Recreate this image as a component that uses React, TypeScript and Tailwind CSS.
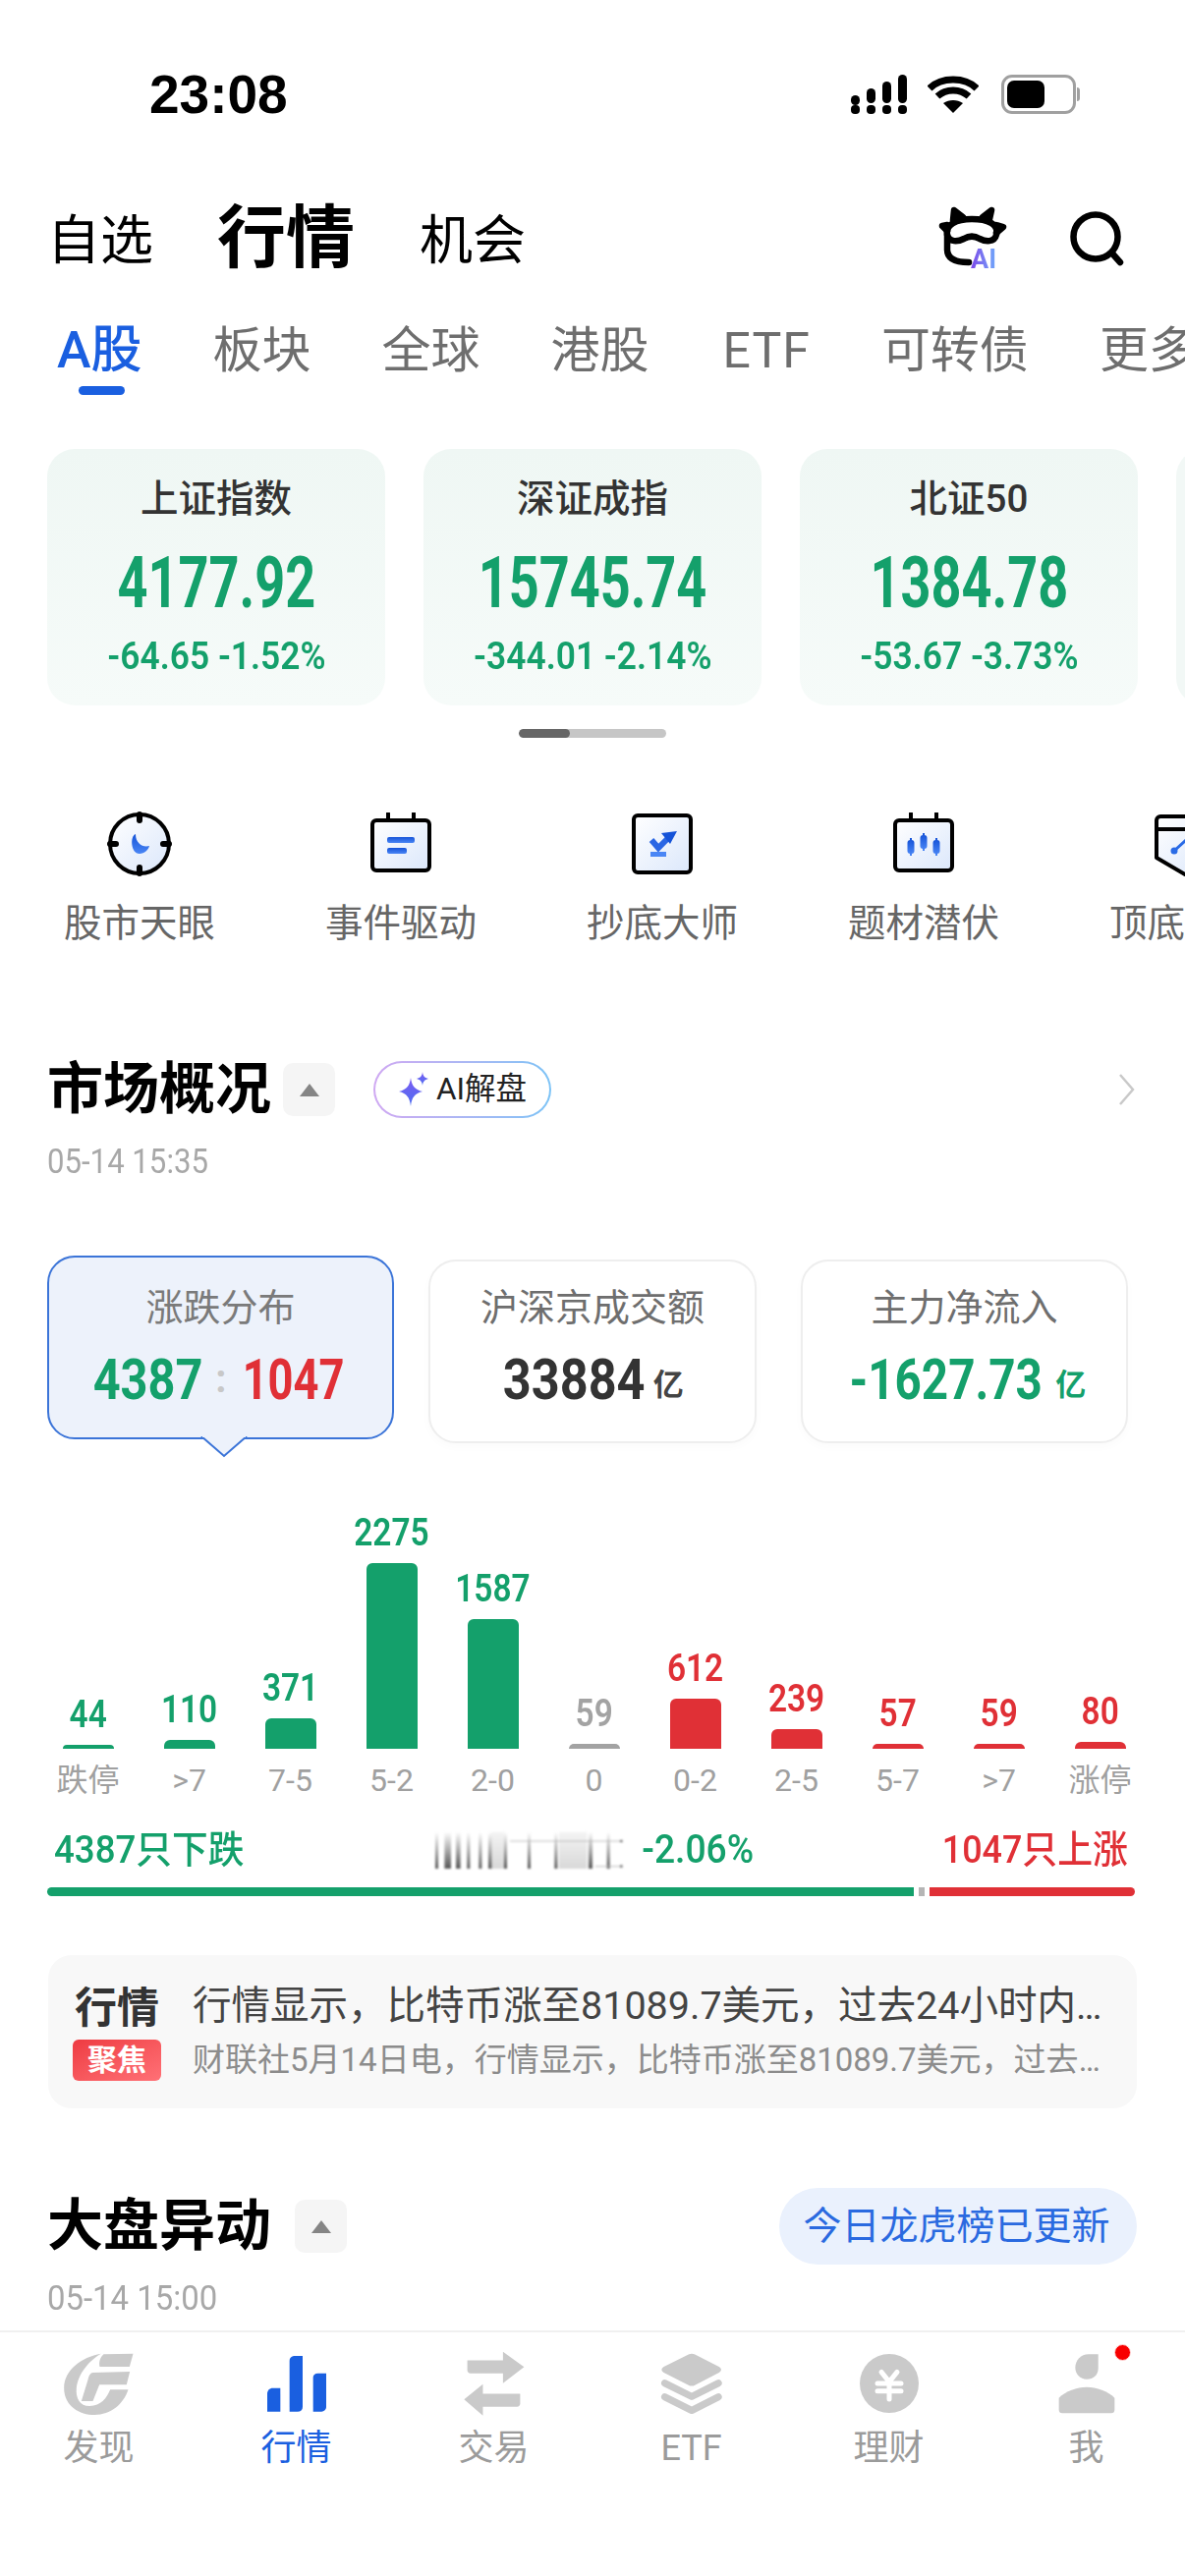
import React from 'react';

const green = 'text-[#14a06b]';
const red = 'text-[#e03036]';

const indexCards = [
  { name: '上证指数', value: '4177.92', change: '-64.65 -1.52%' },
  { name: '深证成指', value: '15745.74', change: '-344.01 -2.14%' },
  { name: '北证50', value: '1384.78', change: '-53.67 -3.73%' },
];

const bars = [
  { value: 44, label: '跌停', h: 'h-[4px]', text: 'text-[#14a06b]', bg: 'bg-[#14a06b]' },
  { value: 110, label: '>7', h: 'h-[9px]', text: 'text-[#14a06b]', bg: 'bg-[#14a06b]' },
  { value: 371, label: '7-5', h: 'h-[31px]', text: 'text-[#14a06b]', bg: 'bg-[#14a06b]' },
  { value: 2275, label: '5-2', h: 'h-[189px]', text: 'text-[#14a06b]', bg: 'bg-[#14a06b]' },
  { value: 1587, label: '2-0', h: 'h-[132px]', text: 'text-[#14a06b]', bg: 'bg-[#14a06b]' },
  { value: 59, label: '0', h: 'h-[5px]', text: 'text-[#a3a3a3]', bg: 'bg-[#a3a3a3]' },
  { value: 612, label: '0-2', h: 'h-[51px]', text: 'text-[#e03036]', bg: 'bg-[#e03036]' },
  { value: 239, label: '2-5', h: 'h-[20px]', text: 'text-[#e03036]', bg: 'bg-[#e03036]' },
  { value: 57, label: '5-7', h: 'h-[5px]', text: 'text-[#e03036]', bg: 'bg-[#e03036]' },
  { value: 59, label: '>7', h: 'h-[5px]', text: 'text-[#e03036]', bg: 'bg-[#e03036]' },
  { value: 80, label: '涨停', h: 'h-[7px]', text: 'text-[#e03036]', bg: 'bg-[#e03036]' },
];

function IconDefs() {
  return (
    <svg width="0" height="0" className="absolute">
      <defs>
        <linearGradient id="paper" x1="0" y1="0" x2="1" y2="1">
          <stop offset="0" stopColor="#ffffff" />
          <stop offset="1" stopColor="#dbe7fb" />
        </linearGradient>
        <linearGradient id="inkBlue" x1="0" y1="0" x2="0" y2="1">
          <stop offset="0" stopColor="#1553d8" />
          <stop offset="1" stopColor="#4a86f5" />
        </linearGradient>
        <linearGradient id="sparkle" x1="0" y1="0" x2="0" y2="1">
          <stop offset="0" stopColor="#7d5cf2" />
          <stop offset="1" stopColor="#4d6ff0" />
        </linearGradient>
      </defs>
    </svg>
  );
}

function SignalIcon() {
  return (
    <svg width="58" height="42" viewBox="0 0 58 42" fill="#000">
      <rect x="0" y="22" width="9" height="10" rx="4.5" />
      <rect x="16" y="15" width="9" height="15" rx="4.5" />
      <rect x="32" y="8" width="9" height="22" rx="4.5" />
      <rect x="48" y="1" width="9" height="29" rx="4.5" />
      <rect x="0" y="32" width="9" height="9" rx="4" />
      <rect x="16" y="32" width="9" height="9" rx="4" />
      <rect x="32" y="32" width="9" height="9" rx="4" />
      <rect x="48" y="32" width="9" height="9" rx="4" />
    </svg>
  );
}

function WifiIcon() {
  return (
    <svg width="52" height="40" viewBox="0 0 52 40" fill="none" stroke="#000" strokeWidth="7">
      <path d="M2 14C14 2 38 2 50 14" />
      <path d="M10 22C19 14 33 14 42 22" />
      <path d="M26 39L16 29C22 25 30 25 36 29Z" fill="#000" stroke="none" />
    </svg>
  );
}

function BatteryIcon() {
  return (
    <div className="flex items-center">
      <div className="w-[76px] h-[40px] rounded-[11px] border-[3px] border-[#a0a0a0] p-[3px]">
        <div className="w-[38px] h-full rounded-[7px] bg-black" />
      </div>
      <div className="w-[3px] h-[14px] rounded-r-full bg-[#a0a0a0] ml-[1px]" />
    </div>
  );
}

function CatIcon() {
  return (
    <div className="relative w-[80px] h-[70px]">
      <svg width="80" height="70" viewBox="0 0 80 70" fill="none" stroke="#000" strokeWidth="6.5" strokeLinecap="round" strokeLinejoin="round">
        <path d="M13 31C11 21 22 15 38 15C54 15 66 20 63 31C61 39 52 38 46 35C41 32 35 32 30 35C24 38 15 39 13 31Z" />
        <path d="M13 31V46C13 54 19 59 35 59" />
        <path d="M19 16L20 6L29 13" fill="#000" />
        <path d="M56 15L58 6L49 13" fill="#000" />
        <path d="M13 21L8 22L13 27" fill="#000" />
        <path d="M63 21L70 23L63 29" fill="#000" />
      </svg>
      <span className="absolute left-[37px] top-[41px] text-[27px] leading-[30px] font-bold bg-linear-to-r from-[#7a45e8] to-[#6ea8fa] bg-clip-text text-transparent">AI</span>
    </div>
  );
}

function SearchIcon() {
  return (
    <svg width="60" height="60" viewBox="0 0 60 60" fill="none" stroke="#000" strokeWidth="6.5" strokeLinecap="round">
      <circle cx="28" cy="28" r="22.5" />
      <path d="M45 45L53 54" />
    </svg>
  );
}

function EyeIcon() {
  return (
    <svg width="66" height="66" viewBox="0 0 66 66" fill="url(#paper)" stroke="#000" strokeWidth="4">
      <circle cx="33" cy="33" r="30" />
      <path d="M33 3V9M33 57V63M3 33H9M57 33H63" strokeWidth="6" strokeLinecap="round" />
      <path d="M29 23C23 25 24 43 33 43C38 43 42 39 43 35C37 37 29 33 29 23Z" fill="url(#inkBlue)" stroke="none" />
    </svg>
  );
}

function CalendarIcon() {
  return (
    <svg width="64" height="64" viewBox="0 0 64 64" fill="url(#paper)" stroke="#000" strokeWidth="4">
      <rect x="3" y="8" width="58" height="51" rx="4" />
      <path d="M19 1V8M45 1V8" strokeLinecap="round" />
      <rect x="18" y="25" width="28" height="6" rx="2" fill="url(#inkBlue)" stroke="none" />
      <rect x="18" y="36" width="20" height="6" rx="2" fill="url(#inkBlue)" stroke="none" />
    </svg>
  );
}

function BottomIcon() {
  return (
    <svg width="64" height="64" viewBox="0 0 64 64" fill="url(#paper)" stroke="#000" strokeWidth="4">
      <rect x="3" y="3" width="58" height="58" rx="4" />
      <path d="M21 28L28 36L40 24" fill="none" stroke="#2a66e4" strokeWidth="6" />
      <path d="M31 21L47 19L40 32Z" fill="#1553d8" stroke="none" />
      <rect x="20" y="40" width="16" height="5" fill="#4a86f5" stroke="none" />
    </svg>
  );
}

function CandleIcon() {
  return (
    <svg width="64" height="64" viewBox="0 0 64 64" fill="url(#paper)" stroke="#000" strokeWidth="4">
      <rect x="3" y="8" width="58" height="51" rx="4" />
      <path d="M19 1V8M45 1V8" strokeLinecap="round" />
      <g fill="url(#inkBlue)" stroke="none">
        <rect x="15.5" y="28" width="7" height="14" rx="3" />
        <rect x="18" y="26" width="2" height="18" />
        <rect x="28.5" y="23" width="7" height="14" rx="3" />
        <rect x="31" y="21" width="2" height="18" />
        <rect x="41.5" y="28" width="7" height="14" rx="3" />
        <rect x="44" y="26" width="2" height="18" />
      </g>
    </svg>
  );
}

function TopBottomIcon() {
  return (
    <svg width="64" height="66" viewBox="0 0 64 66" fill="url(#paper)" stroke="#000" strokeWidth="4" strokeLinejoin="round">
      <path d="M7 5H57C59 5 61 7 61 9V47L32 64L3 47V9C3 7 5 5 7 5Z" />
      <path d="M3 18H61" />
      <path d="M21 40L33 29L42 36" fill="none" stroke="#2a6be6" strokeWidth="3" />
      <circle cx="21" cy="40" r="3.5" fill="#2a6be6" stroke="none" />
    </svg>
  );
}

function Toggle() {
  return (
    <div className="w-[53px] h-[54px] rounded-[10px] bg-[#f5f5f5] flex items-center justify-center">
      <div className="w-0 h-0 border-x-[10px] border-x-transparent border-b-[13px] border-b-[#858585]" />
    </div>
  );
}

function Sparkle() {
  return (
    <svg width="32" height="36" viewBox="0 0 32 36" fill="url(#sparkle)">
      <path d="M13 6C14 14 17 18 25 20C17 22 14 26 13 35C12 26 9 22 1 20C9 18 12 14 13 6Z" />
      <path d="M25 0C25.5 4 27 6 31 7C27 8 25.5 10 25 14C24.5 10 23 8 19 7C23 6 24.5 4 25 0Z" />
    </svg>
  );
}

// the smeared strip in front of the average change
function SmearStrip() {
  return (
    <svg width="210" height="50" viewBox="0 0 630 150" className="blur-[0.8px]">
      <defs>
        <linearGradient id="smear" x1="0" y1="0" x2="0" y2="1">
          <stop offset="0" stopColor="#fff" />
          <stop offset="1" stopColor="#555" />
        </linearGradient>
        <linearGradient id="smearBox" x1="0" y1="0" x2="0" y2="1">
          <stop offset="0" stopColor="#f4f4f4" />
          <stop offset="1" stopColor="#d8d8d8" />
        </linearGradient>
      </defs>
      <rect x="178" y="20" width="50" height="112" fill="url(#smearBox)" />
      <rect x="390" y="20" width="85" height="112" fill="url(#smearBox)" />
      <g fill="url(#smear)">
        <rect x="12" y="20" width="9" height="112" />
        <rect x="40" y="20" width="20" height="112" />
        <rect x="75" y="20" width="14" height="112" />
        <rect x="109" y="20" width="9" height="112" />
        <rect x="145" y="20" width="9" height="112" />
        <rect x="174" y="20" width="10" height="112" />
        <rect x="222" y="20" width="9" height="112" />
        <rect x="294" y="20" width="9" height="112" />
        <rect x="376" y="20" width="9" height="112" />
        <rect x="480" y="20" width="12" height="112" />
        <rect x="536" y="20" width="9" height="112" />
      </g>
      <path d="M240 48H580" stroke="#aaa" strokeWidth="4" opacity="0.5" />
      <circle cx="580" cy="48" r="4" fill="#666" />
      <path d="M500 125H580" stroke="#bbb" strokeWidth="3" />
      <circle cx="580" cy="125" r="4" fill="#666" />
    </svg>
  );
}

function LogoTab() {
  return (
    <svg width="72" height="65" viewBox="47 40 215 195" fill="#cacaca">
      <path d="M160 45C100 55 47 95 47 150C47 205 95 232 140 232C190 232 228 200 243 155L188 155C178 180 160 205 125 205C95 205 82 180 85 150C90 105 125 65 160 45Z" />
      <path d="M168 47L258 45L247 85L156 85C152 70 158 56 168 47Z" />
      <path d="M135 103L248 100L238 140L155 140L135 190L100 190L120 125C123 112 128 103 135 103Z" />
    </svg>
  );
}

function MarketTab() {
  return (
    <svg width="62" height="60" viewBox="660 55 186 178" fill="#1a5fe0">
      <path d="M663 230V175C663 165 670 158 680 158H703V230Z" />
      <path d="M731 230V75C731 65 738 60 748 60H771V215C771 225 765 230 755 230Z" />
      <path d="M803 230V125C803 118 808 113 818 113H843V215C843 225 835 230 825 230Z" />
    </svg>
  );
}

function TradeTab() {
  return (
    <svg width="62" height="66" viewBox="1265 36 186 200" fill="#cacaca">
      <path d="M1385 38L1450 85L1385 135V105H1285C1279 105 1275 100 1275 95V65H1385Z" />
      <path d="M1323 138L1265 185L1323 235V208H1428C1434 208 1438 203 1438 198V168H1323Z" />
    </svg>
  );
}

function EtfTab() {
  return (
    <svg width="64" height="64" viewBox="92 30 196 192" fill="#cacaca">
      <path d="M180 36C186 32 194 32 200 36L275 74C284 79 284 87 275 92L200 131C194 135 186 135 180 131L103 92C94 87 94 79 103 74Z" />
      <path d="M106 125L190 167L273 125M106 168L190 210L273 168" fill="none" stroke="#cacaca" strokeWidth="22" strokeLinecap="round" strokeLinejoin="round" />
    </svg>
  );
}

function MoneyTab() {
  return (
    <svg width="60" height="60" viewBox="702 45 180 180">
      <circle cx="792" cy="135" r="90" fill="#cacaca" />
      <path d="M768 100L792 130L816 100M756 135H828M756 158H828M792 130V183" fill="none" stroke="#fff" strokeWidth="15" strokeLinecap="round" strokeLinejoin="round" />
    </svg>
  );
}

function MeTab() {
  return (
    <div className="relative">
      <svg width="60" height="62" viewBox="1305 48 180 186" fill="#cacaca">
        <path d="M1430 52V95C1430 115 1415 128 1395 128C1375 128 1360 112 1360 92C1360 70 1378 52 1400 52Z" />
        <path d="M1310 185C1330 165 1365 152 1395 152C1425 152 1460 165 1480 185V222C1480 228 1476 232 1470 232H1320C1314 232 1310 228 1310 222Z" />
      </svg>
      <div className="absolute left-[58px] -top-[9px] w-[17px] h-[17px] rounded-full bg-[#f80000] border border-[#fdd]" />
    </div>
  );
}

const tabs = [
  { label: '发现', icon: <LogoTab /> },
  { label: '行情', icon: <MarketTab />, active: true },
  { label: '交易', icon: <TradeTab /> },
  { label: 'ETF', icon: <EtfTab /> },
  { label: '理财', icon: <MoneyTab /> },
  { label: '我', icon: <MeTab /> },
];

export default function App() {
  const subTab = 'text-[50px] leading-[60px] text-[#6e6e6e] shrink-0';
  return (
    <div className="w-[1206px] h-[2622px] bg-white overflow-hidden flex flex-col font-['Roboto','Noto_Sans_CJK_SC',sans-serif]">
      <IconDefs />

      {/* status bar */}
      <div className="flex items-center justify-between h-[44px] mt-[74px] pl-[152px] pr-[107px] shrink-0">
        <span className="font-['Liberation_Sans',sans-serif] font-bold text-[55px] leading-[44px] text-black">23:08</span>
        <div className="flex items-center">
          <SignalIcon />
          <div className="ml-[20px]"><WifiIcon /></div>
          <div className="ml-[23px]"><BatteryIcon /></div>
        </div>
      </div>

      {/* top tabs */}
      <div className="flex items-center h-[94px] mt-[78px] pl-[48px] pr-[59px] shrink-0">
        <span className="text-[54px] leading-[60px] text-black mt-[6px]">自选</span>
        <span className="text-[70px] leading-[80px] font-bold text-black ml-[65px]">行情</span>
        <span className="text-[54px] leading-[60px] text-black ml-[66px] mt-[6px]">机会</span>
        <div className="ml-auto flex items-center gap-[56px]">
          <CatIcon />
          <SearchIcon />
        </div>
      </div>

      {/* market tabs */}
      <div className="flex items-center h-[60px] mt-[37px] pl-[58px] gap-[72px] shrink-0 whitespace-nowrap">
        <span className="relative text-[52px] leading-[60px] font-medium text-[#1a5fe0]">
          A股
          <span className="absolute left-[22px] -bottom-[15px] w-[47px] h-[9px] rounded-full bg-[#1a5fe0]" />
        </span>
        <span className={subTab}>板块</span>
        <span className={subTab}>全球</span>
        <span className={subTab}>港股</span>
        <span className={`${subTab} ml-[3px] tracking-[1px]`}>ETF</span>
        <span className={subTab}>可转债</span>
        <span className={subTab}>更多</span>
      </div>

      {/* index cards */}
      <div className="flex gap-[39px] pl-[48px] mt-[70px] shrink-0">
        {indexCards.map((c) => (
          <div key={c.name} className="w-[344px] h-[261px] shrink-0 rounded-[28px] bg-linear-to-b from-[#eff7f4] to-[#f6fbf9] flex flex-col items-center pt-[27px]">
            <span className="text-[38.5px] leading-[48px] font-medium text-[#333]">{c.name}</span>
            <span className={`inline-block mt-[26px] text-[72px] leading-[72px] font-bold scale-x-[0.75] ${green}`}>{c.value}</span>
            <span className={`inline-block mt-[16px] text-[38px] leading-[44px] font-semibold whitespace-nowrap scale-x-[0.93] ${green}`}>{c.change}</span>
          </div>
        ))}
        <div className="w-[344px] h-[261px] shrink-0 rounded-[28px] bg-[#f2f8f6]" />
      </div>

      {/* scroll indicator */}
      <div className="self-center w-[150px] h-[9px] rounded-full bg-[#c6c6c6] mt-[24px] shrink-0 overflow-hidden">
        <div className="w-[52px] h-full rounded-full bg-[#666]" />
      </div>

      {/* shortcuts */}
      <div className="flex pl-[9px] mt-[75px] shrink-0">
        {[
          { label: '股市天眼', icon: <EyeIcon /> },
          { label: '事件驱动', icon: <CalendarIcon /> },
          { label: '抄底大师', icon: <BottomIcon /> },
          { label: '题材潜伏', icon: <CandleIcon /> },
          { label: '顶底信号', icon: <TopBottomIcon /> },
        ].map((s) => (
          <div key={s.label} className="w-[266px] shrink-0 flex flex-col items-center">
            <div className="h-[66px] flex items-center justify-center">{s.icon}</div>
            <span className="mt-[25px] text-[38.5px] leading-[46px] text-[#666]">{s.label}</span>
          </div>
        ))}
      </div>

      {/* market overview */}
      <div className="flex items-center h-[60px] mt-[116px] pl-[48px] pr-[50px] shrink-0">
        <span className="text-[57px] leading-[60px] font-bold text-black">市场概况</span>
        <div className="ml-[12px]"><Toggle /></div>
        <div className="ml-[39px] p-[2px] rounded-full bg-linear-to-r from-[#cfa8f2] to-[#7cc3f6]">
          <div className="h-[54px] px-[23px] rounded-full bg-white flex items-center gap-[7px]">
            <Sparkle />
            <span className="text-[31.5px] leading-[40px] text-[#222]">AI解盘</span>
          </div>
        </div>
        <svg width="18" height="32" viewBox="0 0 18 32" fill="none" stroke="#c9c9c9" strokeWidth="2.5" className="ml-auto">
          <path d="M2 1L15 16L2 31" />
        </svg>
      </div>
      <div className="pl-[48px] mt-[24px] shrink-0">
        <span className="inline-block origin-left text-[35px] leading-[40px] text-[#a8a8a8] scale-x-[0.89]">05-14 15:35</span>
      </div>

      {/* overview cards */}
      <div className="flex items-start pl-[48px] mt-[75px] shrink-0">
        <div className="relative w-[353px] h-[187px] rounded-[28px] border-2 border-[#3b74d8] bg-[#edf2fb] flex flex-col items-center pt-[27px]">
          <span className="text-[38px] leading-[48px] text-[#7a7a7a]">涨跌分布</span>
          <div className="flex items-center mt-[19px] text-[58px] leading-[60px] font-bold">
            <span className={`inline-block scale-x-[0.84] ${green}`}>4387</span>
            <span className="text-[#c8c8c8] text-[40px] ml-[2px] mr-[1px]">:</span>
            <span className={`inline-block scale-x-[0.78] ${red}`}>1047</span>
          </div>
          <svg width="50" height="22" viewBox="0 0 50 22" className="absolute left-[153px] -bottom-[21px]">
            <path d="M2 0L25 20L48 0" fill="#edf2fb" stroke="#3b74d8" strokeWidth="2" />
            <rect x="3" y="0" width="44" height="1" fill="#edf2fb" />
          </svg>
        </div>
        <div className="ml-[35px] mt-[4px] w-[334px] h-[187px] rounded-[28px] border-2 border-[#eeeeee] bg-white flex flex-col items-center pt-[23px] shadow-[0_4px_10px_rgba(0,0,0,0.02)]">
          <span className="text-[38px] leading-[48px] text-[#6e6e6e]">沪深京成交额</span>
          <div className="flex items-end mt-[19px] mr-[9px]">
            <span className="inline-block scale-x-[0.87] -mr-[8px] text-[58px] leading-[60px] font-bold text-[#333]">33884</span>
            <span className="text-[31px] leading-[48px] font-semibold text-[#444] ml-[5px]">亿</span>
          </div>
        </div>
        <div className="ml-[45px] mt-[4px] w-[333px] h-[187px] rounded-[28px] border-2 border-[#eeeeee] bg-white flex flex-col items-center pt-[23px] shadow-[0_4px_10px_rgba(0,0,0,0.02)]">
          <span className="text-[38px] leading-[48px] text-[#6e6e6e]">主力净流入</span>
          <div className="flex items-end mt-[19px] whitespace-nowrap">
            <span className={`inline-block scale-x-[0.82] -mx-[15px] text-[58px] leading-[60px] font-bold ${green}`}>-1627.73</span>
            <span className={`text-[31px] leading-[48px] font-semibold ml-[7px] ${green}`}>亿</span>
          </div>
        </div>
      </div>

      {/* distribution chart */}
      <div className="flex items-end pl-[38px] mt-[72px] shrink-0">
        {bars.map((b, i) => (
          <div key={i} className="w-[103px] shrink-0 flex flex-col items-center">
            <span className={`inline-block text-[38px] leading-[38px] font-semibold scale-x-[0.88] mb-[12px] ${b.text}`}>{b.value}</span>
            <div className={`w-[52px] rounded-t-[6px] ${b.h} ${b.bg}`} />
            <span className="mt-[12px] h-[40px] text-[32px] leading-[40px] text-[#a0a0a0] whitespace-nowrap">{b.label}</span>
          </div>
        ))}
      </div>

      {/* up / down summary */}
      <div className="flex items-center justify-between h-[50px] mt-[26px] pl-[55px] pr-[58px] shrink-0">
        <span className={`inline-block origin-left w-[206px] text-[39px] leading-[50px] font-medium whitespace-nowrap scale-x-[0.94] ${green}`}>4387只下跌</span>
        <div className="flex items-center ml-[8px]">
          <SmearStrip />
          <span className={`inline-block text-[40px] leading-[50px] font-medium scale-x-[0.93] ${green}`}>-2.06%</span>
        </div>
        <span className={`inline-block origin-right w-[206px] text-right text-[39px] leading-[50px] font-medium whitespace-nowrap scale-x-[0.92] ${red}`}>1047只上涨</span>
      </div>
      <div className="flex items-center h-[9px] mt-[13px] pl-[48px] pr-[51px] shrink-0">
        <div className="w-[882px] h-full rounded-l-full bg-[#14a06b]" />
        <div className="w-[6px] h-full bg-[#b5b5b5] ml-[5px]" />
        <div className="flex-1 h-full rounded-r-full bg-[#e03036] ml-[5px]" />
      </div>

      {/* news */}
      <div className="mx-[49px] h-[156px] mt-[60px] rounded-[24px] bg-[#f8f8f8] flex items-center pl-[26px] pr-[30px] shrink-0">
        <div className="w-[88px] shrink-0 flex flex-col items-center">
          <span className="text-[43px] leading-[52px] font-bold text-[#333]">行情</span>
          <span className="mt-[6px] w-[90px] h-[42px] rounded-[6px] bg-linear-to-br from-[#ee3a42] to-[#ff7076] text-white text-[30px] leading-[42px] font-bold text-center">聚焦</span>
        </div>
        <div className="ml-[33px] min-w-0 flex-1 flex flex-col gap-[8px]">
          <span className="truncate text-[39.5px] leading-[50px] text-[#444]">行情显示，比特币涨至81089.7美元，过去24小时内涨幅超过百分之三</span>
          <span className="truncate text-[33px] leading-[44px] text-[#8c8c8c]">财联社5月14日电，行情显示，比特币涨至81089.7美元，过去24小时内</span>
        </div>
      </div>

      {/* market moves */}
      <div className="flex items-center h-[78px] mt-[81px] pl-[48px] pr-[49px] shrink-0">
        <span className="text-[57px] leading-[60px] font-bold text-black">大盘异动</span>
        <div className="ml-[24px]"><Toggle /></div>
        <span className="ml-auto h-[78px] w-[364px] pr-[3px] rounded-full bg-[#eaf1fd] text-[#2a6ae0] text-[39px] leading-[78px] text-center">今日龙虎榜已更新</span>
      </div>
      <div className="pl-[48px] mt-[15px] shrink-0">
        <span className="inline-block origin-left text-[35px] leading-[40px] text-[#a8a8a8] scale-x-[0.94]">05-14 15:00</span>
      </div>

      {/* bottom tab bar */}
      <div className="flex-1 mt-[12px] border-t-2 border-[#f0f0f0] pt-[19px] bg-white">
        <div className="flex">
          {tabs.map((t) => (
            <div key={t.label} className="w-[201px] flex flex-col items-center">
              <div className="h-[66px] flex items-center justify-center">{t.icon}</div>
              <span className={`mt-[13px] text-[36px] leading-[40px] ${t.active ? 'text-[#1a5fe0]' : 'text-[#9b9b9b]'}`}>{t.label}</span>
            </div>
          ))}
        </div>
      </div>
    </div>
  );
}
